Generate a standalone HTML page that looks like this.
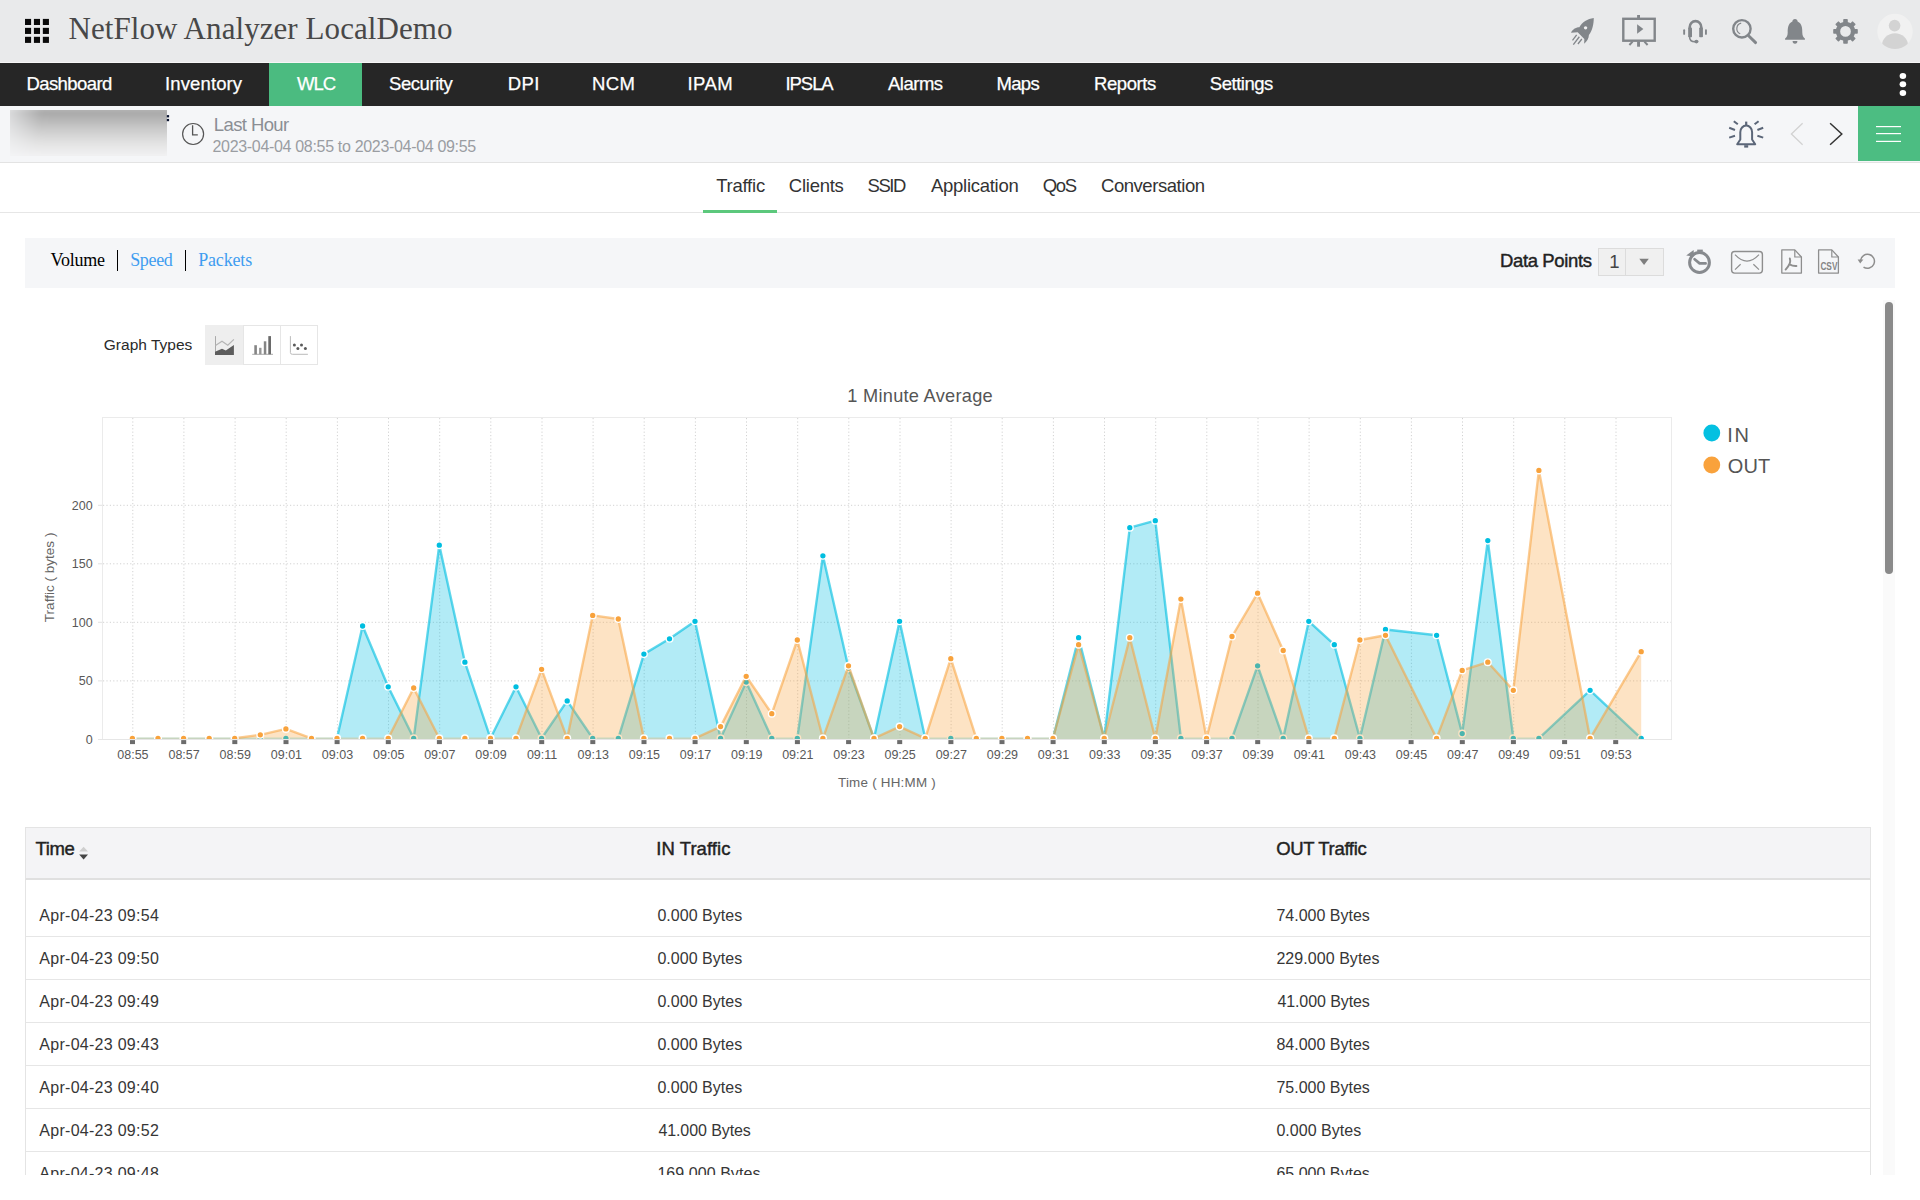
<!DOCTYPE html>
<html><head><meta charset="utf-8"><title>NetFlow Analyzer</title>
<style>
html,body{margin:0;padding:0}
body{width:1920px;height:1200px;overflow:hidden;background:#fff;position:relative;font-family:"Liberation Sans",sans-serif}
.abs{position:absolute}
.t{position:absolute;white-space:pre}
</style></head>
<body>
<!-- top header -->
<div class="abs" style="left:0;top:0;width:1920px;height:63px;background:#e9eaeb"></div>
<div class="abs" style="left:0;top:62px;width:1920px;height:1px;background:#f6f6f6"></div>
<!-- nav -->
<div class="abs" style="left:0;top:63px;width:1920px;height:43px;background:#262626"></div>
<div class="abs" style="left:269px;top:63px;width:93px;height:43px;background:#4bbb80"></div>
<!-- sub header -->
<div class="abs" style="left:0;top:106px;width:1920px;height:56px;background:#f5f6f8;border-bottom:1px solid #e3e3e3"></div>
<div class="abs" style="left:1858px;top:106px;width:62px;height:55px;background:#4cbd82"></div>
<div class="abs" style="left:10px;top:110px;width:157px;height:46px;overflow:hidden"><div class="abs" style="left:-6px;top:-3px;width:169px;height:52px;filter:blur(3px);background:linear-gradient(100deg,rgba(245,246,248,.75) 0%,rgba(245,246,248,0) 22%),linear-gradient(to bottom,#9f9f9f 0%,#b2b2b2 20%,#cdcdcd 45%,#e2e2e2 68%,#eeeeef 88%,#f3f3f5 100%)"></div></div>
<!-- tabs border -->
<div class="abs" style="left:0;top:212px;width:1920px;height:1px;background:#e6e6e6"></div>
<div class="abs" style="left:703px;top:210px;width:74px;height:3px;background:#5cc87c"></div>
<!-- toolbar -->
<div class="abs" style="left:25px;top:238px;width:1870px;height:50px;background:#f5f6f8"></div>
<div class="abs" style="left:116.8px;top:250.2px;width:1.5px;height:20.5px;background:#000"></div>
<div class="abs" style="left:184.8px;top:250.2px;width:1.5px;height:20.5px;background:#000"></div>
<!-- select -->
<div class="abs" style="left:1598px;top:248px;width:66px;height:28px;background:#f0f0f0;border:1px solid #dcdcdc;box-sizing:border-box"></div>
<div class="abs" style="left:1625px;top:248px;width:1px;height:28px;background:#dcdcdc"></div>
<!-- graph type buttons -->
<div class="abs" style="left:205px;top:325px;width:113px;height:40px;border:1px solid #e6e6e6;box-sizing:border-box;background:#fff"></div>
<div class="abs" style="left:205px;top:325px;width:37.6px;height:40px;background:#eeeeee"></div>
<div class="abs" style="left:243px;top:326px;width:1px;height:38px;background:#e6e6e6"></div>
<div class="abs" style="left:280px;top:326px;width:1px;height:38px;background:#e6e6e6"></div>
<!-- scrollbar -->
<div class="abs" style="left:1883px;top:300px;width:12px;height:875px;background:#fafafa"></div>
<div class="abs" style="left:1885px;top:302px;width:8px;height:272px;background:#8a8a8a;border-radius:4px"></div>
<!-- table -->
<div class="abs" style="left:25px;top:827px;width:1846px;height:348px;overflow:hidden">
  <div class="abs" style="left:0;top:0;width:1846px;height:400px;border-left:1px solid #e4e4e4;border-right:1px solid #e4e4e4;box-sizing:border-box"></div>
  <div class="abs" style="left:0;top:0;width:1846px;height:53px;background:#f4f4f6;border:1px solid #e4e4e4;border-bottom:2px solid #e0e0e0;box-sizing:border-box"></div>
  <div class="abs" style="left:1px;top:109px;width:1844px;height:1px;background:#e6e6e6"></div><div class="abs" style="left:1px;top:152px;width:1844px;height:1px;background:#e6e6e6"></div><div class="abs" style="left:1px;top:195px;width:1844px;height:1px;background:#e6e6e6"></div><div class="abs" style="left:1px;top:238px;width:1844px;height:1px;background:#e6e6e6"></div><div class="abs" style="left:1px;top:281px;width:1844px;height:1px;background:#e6e6e6"></div><div class="abs" style="left:1px;top:324px;width:1844px;height:1px;background:#e6e6e6"></div><div class="abs" style="left:1px;top:367px;width:1844px;height:1px;background:#e6e6e6"></div>
</div>
<div class="abs" style="left:0;top:0;width:1920px;height:1175px;overflow:hidden"><span class="t" style="left:39.30px;top:906px;font-family:'Liberation Sans';font-size:16px;line-height:20px;font-weight:400;color:#363636;letter-spacing:0.279px">Apr-04-23 09:54</span><span class="t" style="left:657.40px;top:906px;font-family:'Liberation Sans';font-size:16px;line-height:20px;font-weight:400;color:#363636;letter-spacing:0.040px">0.000 Bytes</span><span class="t" style="left:1276.40px;top:906px;font-family:'Liberation Sans';font-size:16px;line-height:20px;font-weight:400;color:#363636;letter-spacing:0.000px">74.000 Bytes</span><span class="t" style="left:39.30px;top:949px;font-family:'Liberation Sans';font-size:16px;line-height:20px;font-weight:400;color:#363636;letter-spacing:0.279px">Apr-04-23 09:50</span><span class="t" style="left:657.40px;top:949px;font-family:'Liberation Sans';font-size:16px;line-height:20px;font-weight:400;color:#363636;letter-spacing:0.040px">0.000 Bytes</span><span class="t" style="left:1276.40px;top:949px;font-family:'Liberation Sans';font-size:16px;line-height:20px;font-weight:400;color:#363636;letter-spacing:0.058px">229.000 Bytes</span><span class="t" style="left:39.30px;top:992px;font-family:'Liberation Sans';font-size:16px;line-height:20px;font-weight:400;color:#363636;letter-spacing:0.279px">Apr-04-23 09:49</span><span class="t" style="left:657.40px;top:992px;font-family:'Liberation Sans';font-size:16px;line-height:20px;font-weight:400;color:#363636;letter-spacing:0.040px">0.000 Bytes</span><span class="t" style="left:1277.40px;top:992px;font-family:'Liberation Sans';font-size:16px;line-height:20px;font-weight:400;color:#363636;letter-spacing:-0.091px">41.000 Bytes</span><span class="t" style="left:39.30px;top:1035px;font-family:'Liberation Sans';font-size:16px;line-height:20px;font-weight:400;color:#363636;letter-spacing:0.279px">Apr-04-23 09:43</span><span class="t" style="left:657.40px;top:1035px;font-family:'Liberation Sans';font-size:16px;line-height:20px;font-weight:400;color:#363636;letter-spacing:0.040px">0.000 Bytes</span><span class="t" style="left:1276.40px;top:1035px;font-family:'Liberation Sans';font-size:16px;line-height:20px;font-weight:400;color:#363636;letter-spacing:0.000px">84.000 Bytes</span><span class="t" style="left:39.30px;top:1078px;font-family:'Liberation Sans';font-size:16px;line-height:20px;font-weight:400;color:#363636;letter-spacing:0.279px">Apr-04-23 09:40</span><span class="t" style="left:657.40px;top:1078px;font-family:'Liberation Sans';font-size:16px;line-height:20px;font-weight:400;color:#363636;letter-spacing:0.040px">0.000 Bytes</span><span class="t" style="left:1276.40px;top:1078px;font-family:'Liberation Sans';font-size:16px;line-height:20px;font-weight:400;color:#363636;letter-spacing:0.000px">75.000 Bytes</span><span class="t" style="left:39.30px;top:1121px;font-family:'Liberation Sans';font-size:16px;line-height:20px;font-weight:400;color:#363636;letter-spacing:0.279px">Apr-04-23 09:52</span><span class="t" style="left:658.40px;top:1121px;font-family:'Liberation Sans';font-size:16px;line-height:20px;font-weight:400;color:#363636;letter-spacing:-0.091px">41.000 Bytes</span><span class="t" style="left:1276.40px;top:1121px;font-family:'Liberation Sans';font-size:16px;line-height:20px;font-weight:400;color:#363636;letter-spacing:0.040px">0.000 Bytes</span><span class="t" style="left:39.30px;top:1164px;font-family:'Liberation Sans';font-size:16px;line-height:20px;font-weight:400;color:#363636;letter-spacing:0.279px">Apr-04-23 09:48</span><span class="t" style="left:657.40px;top:1164px;font-family:'Liberation Sans';font-size:16px;line-height:20px;font-weight:400;color:#363636;letter-spacing:0.058px">169.000 Bytes</span><span class="t" style="left:1276.40px;top:1164px;font-family:'Liberation Sans';font-size:16px;line-height:20px;font-weight:400;color:#363636;letter-spacing:0.000px">65.000 Bytes</span></div>
<svg class="abs" style="left:0;top:0" width="1920" height="1200" viewBox="0 0 1920 1200"><defs><clipPath id="pc"><rect x="102" y="417" width="1570" height="321.9"/></clipPath></defs><rect x="102.5" y="417.5" width="1569" height="322" fill="#fff" stroke="#ebebeb" stroke-width="1"/><g stroke="#d2d2d2" stroke-width="1" stroke-dasharray="1.2,2.2" fill="none"><line x1="103" y1="680.9" x2="1671" y2="680.9"/><line x1="103" y1="622.3" x2="1671" y2="622.3"/><line x1="103" y1="563.8" x2="1671" y2="563.8"/><line x1="103" y1="505.3" x2="1671" y2="505.3"/><line x1="132.8" y1="418" x2="132.8" y2="738"/><line x1="183.9" y1="418" x2="183.9" y2="738"/><line x1="235.1" y1="418" x2="235.1" y2="738"/><line x1="286.2" y1="418" x2="286.2" y2="738"/><line x1="337.4" y1="418" x2="337.4" y2="738"/><line x1="388.5" y1="418" x2="388.5" y2="738"/><line x1="439.7" y1="418" x2="439.7" y2="738"/><line x1="490.8" y1="418" x2="490.8" y2="738"/><line x1="542.0" y1="418" x2="542.0" y2="738"/><line x1="593.1" y1="418" x2="593.1" y2="738"/><line x1="644.2" y1="418" x2="644.2" y2="738"/><line x1="695.4" y1="418" x2="695.4" y2="738"/><line x1="746.5" y1="418" x2="746.5" y2="738"/><line x1="797.7" y1="418" x2="797.7" y2="738"/><line x1="848.8" y1="418" x2="848.8" y2="738"/><line x1="900.0" y1="418" x2="900.0" y2="738"/><line x1="951.1" y1="418" x2="951.1" y2="738"/><line x1="1002.2" y1="418" x2="1002.2" y2="738"/><line x1="1053.4" y1="418" x2="1053.4" y2="738"/><line x1="1104.5" y1="418" x2="1104.5" y2="738"/><line x1="1155.7" y1="418" x2="1155.7" y2="738"/><line x1="1206.8" y1="418" x2="1206.8" y2="738"/><line x1="1258.0" y1="418" x2="1258.0" y2="738"/><line x1="1309.1" y1="418" x2="1309.1" y2="738"/><line x1="1360.3" y1="418" x2="1360.3" y2="738"/><line x1="1411.4" y1="418" x2="1411.4" y2="738"/><line x1="1462.5" y1="418" x2="1462.5" y2="738"/><line x1="1513.7" y1="418" x2="1513.7" y2="738"/><line x1="1564.8" y1="418" x2="1564.8" y2="738"/><line x1="1616.0" y1="418" x2="1616.0" y2="738"/></g><line x1="98" y1="739.5" x2="1672" y2="739.5" stroke="#e6e6e6" stroke-width="1.2"/><g clip-path="url(#pc)"><polygon points="132.4,740.3 132.4,738.3 158.0,738.3 183.6,738.3 209.2,738.3 234.7,738.3 260.3,738.3 285.9,738.3 311.5,738.3 337.0,738.3 362.6,626.0 388.2,686.8 413.7,738.3 439.3,545.2 464.9,662.2 490.5,738.3 516.0,686.8 541.6,738.3 567.2,700.9 592.7,738.3 618.3,738.3 643.9,654.1 669.5,638.8 695.0,621.3 720.6,738.3 746.2,682.1 771.8,738.3 797.3,738.3 822.9,555.8 848.5,668.1 874.0,738.3 899.6,621.3 925.2,738.3 950.8,738.3 976.3,738.3 1001.9,738.3 1027.5,738.3 1053.0,738.3 1078.6,637.7 1104.2,738.3 1129.8,527.7 1155.3,520.7 1180.9,738.3 1206.5,738.3 1232.0,738.3 1257.6,665.8 1283.2,738.3 1308.8,621.3 1334.3,644.7 1359.9,738.3 1385.5,629.5 1436.6,635.3 1462.2,733.6 1487.8,540.6 1513.3,738.3 1538.9,738.3 1590.1,690.3 1641.2,738.3 1641.2,740.3" fill="#00bee0" fill-opacity="0.3"/><polyline points="337.0,738.3 362.6,626.0 388.2,686.8 413.7,738.3 439.3,545.2 464.9,662.2 490.5,738.3 516.0,686.8 541.6,738.3 567.2,700.9 592.7,738.3" fill="none" stroke="#00bee0" stroke-opacity="0.62" stroke-width="2.4" stroke-linejoin="round"/><polyline points="618.3,738.3 643.9,654.1 669.5,638.8 695.0,621.3 720.6,738.3 746.2,682.1 771.8,738.3" fill="none" stroke="#00bee0" stroke-opacity="0.62" stroke-width="2.4" stroke-linejoin="round"/><polyline points="797.3,738.3 822.9,555.8 848.5,668.1 874.0,738.3 899.6,621.3 925.2,738.3" fill="none" stroke="#00bee0" stroke-opacity="0.62" stroke-width="2.4" stroke-linejoin="round"/><polyline points="1053.0,738.3 1078.6,637.7 1104.2,738.3 1129.8,527.7 1155.3,520.7 1180.9,738.3" fill="none" stroke="#00bee0" stroke-opacity="0.62" stroke-width="2.4" stroke-linejoin="round"/><polyline points="1232.0,738.3 1257.6,665.8 1283.2,738.3 1308.8,621.3 1334.3,644.7 1359.9,738.3 1385.5,629.5 1436.6,635.3 1462.2,733.6 1487.8,540.6 1513.3,738.3" fill="none" stroke="#00bee0" stroke-opacity="0.62" stroke-width="2.4" stroke-linejoin="round"/><polyline points="1538.9,738.3 1590.1,690.3 1641.2,738.3" fill="none" stroke="#00bee0" stroke-opacity="0.62" stroke-width="2.4" stroke-linejoin="round"/><line x1="132.4" y1="737.8" x2="158.0" y2="737.8" stroke="#00bee0" stroke-opacity="0.18" stroke-width="1.2"/><line x1="158.0" y1="737.8" x2="183.6" y2="737.8" stroke="#00bee0" stroke-opacity="0.18" stroke-width="1.2"/><line x1="183.6" y1="737.8" x2="209.2" y2="737.8" stroke="#00bee0" stroke-opacity="0.18" stroke-width="1.2"/><line x1="209.2" y1="737.8" x2="234.7" y2="737.8" stroke="#00bee0" stroke-opacity="0.18" stroke-width="1.2"/><line x1="234.7" y1="737.8" x2="260.3" y2="737.8" stroke="#00bee0" stroke-opacity="0.18" stroke-width="1.2"/><line x1="260.3" y1="737.8" x2="285.9" y2="737.8" stroke="#00bee0" stroke-opacity="0.18" stroke-width="1.2"/><line x1="285.9" y1="737.8" x2="311.5" y2="737.8" stroke="#00bee0" stroke-opacity="0.18" stroke-width="1.2"/><line x1="311.5" y1="737.8" x2="337.0" y2="737.8" stroke="#00bee0" stroke-opacity="0.18" stroke-width="1.2"/><line x1="592.7" y1="737.8" x2="618.3" y2="737.8" stroke="#00bee0" stroke-opacity="0.18" stroke-width="1.2"/><line x1="771.8" y1="737.8" x2="797.3" y2="737.8" stroke="#00bee0" stroke-opacity="0.18" stroke-width="1.2"/><line x1="925.2" y1="737.8" x2="950.8" y2="737.8" stroke="#00bee0" stroke-opacity="0.18" stroke-width="1.2"/><line x1="950.8" y1="737.8" x2="976.3" y2="737.8" stroke="#00bee0" stroke-opacity="0.18" stroke-width="1.2"/><line x1="976.3" y1="737.8" x2="1001.9" y2="737.8" stroke="#00bee0" stroke-opacity="0.18" stroke-width="1.2"/><line x1="1001.9" y1="737.8" x2="1027.5" y2="737.8" stroke="#00bee0" stroke-opacity="0.18" stroke-width="1.2"/><line x1="1027.5" y1="737.8" x2="1053.0" y2="737.8" stroke="#00bee0" stroke-opacity="0.18" stroke-width="1.2"/><line x1="1180.9" y1="737.8" x2="1206.5" y2="737.8" stroke="#00bee0" stroke-opacity="0.18" stroke-width="1.2"/><line x1="1206.5" y1="737.8" x2="1232.0" y2="737.8" stroke="#00bee0" stroke-opacity="0.18" stroke-width="1.2"/><line x1="1513.3" y1="737.8" x2="1538.9" y2="737.8" stroke="#00bee0" stroke-opacity="0.18" stroke-width="1.2"/><circle cx="132.4" cy="738.3" r="3.35" fill="#00bee0" stroke="#fff" stroke-width="1.4"/><circle cx="158.0" cy="738.3" r="3.35" fill="#00bee0" stroke="#fff" stroke-width="1.4"/><circle cx="183.6" cy="738.3" r="3.35" fill="#00bee0" stroke="#fff" stroke-width="1.4"/><circle cx="209.2" cy="738.3" r="3.35" fill="#00bee0" stroke="#fff" stroke-width="1.4"/><circle cx="234.7" cy="738.3" r="3.35" fill="#00bee0" stroke="#fff" stroke-width="1.4"/><circle cx="260.3" cy="738.3" r="3.35" fill="#00bee0" stroke="#fff" stroke-width="1.4"/><circle cx="285.9" cy="738.3" r="3.35" fill="#00bee0" stroke="#fff" stroke-width="1.4"/><circle cx="311.5" cy="738.3" r="3.35" fill="#00bee0" stroke="#fff" stroke-width="1.4"/><circle cx="337.0" cy="738.3" r="3.35" fill="#00bee0" stroke="#fff" stroke-width="1.4"/><circle cx="362.6" cy="626.0" r="3.35" fill="#00bee0" stroke="#fff" stroke-width="1.4"/><circle cx="388.2" cy="686.8" r="3.35" fill="#00bee0" stroke="#fff" stroke-width="1.4"/><circle cx="413.7" cy="738.3" r="3.35" fill="#00bee0" stroke="#fff" stroke-width="1.4"/><circle cx="439.3" cy="545.2" r="3.35" fill="#00bee0" stroke="#fff" stroke-width="1.4"/><circle cx="464.9" cy="662.2" r="3.35" fill="#00bee0" stroke="#fff" stroke-width="1.4"/><circle cx="490.5" cy="738.3" r="3.35" fill="#00bee0" stroke="#fff" stroke-width="1.4"/><circle cx="516.0" cy="686.8" r="3.35" fill="#00bee0" stroke="#fff" stroke-width="1.4"/><circle cx="541.6" cy="738.3" r="3.35" fill="#00bee0" stroke="#fff" stroke-width="1.4"/><circle cx="567.2" cy="700.9" r="3.35" fill="#00bee0" stroke="#fff" stroke-width="1.4"/><circle cx="592.7" cy="738.3" r="3.35" fill="#00bee0" stroke="#fff" stroke-width="1.4"/><circle cx="618.3" cy="738.3" r="3.35" fill="#00bee0" stroke="#fff" stroke-width="1.4"/><circle cx="643.9" cy="654.1" r="3.35" fill="#00bee0" stroke="#fff" stroke-width="1.4"/><circle cx="669.5" cy="638.8" r="3.35" fill="#00bee0" stroke="#fff" stroke-width="1.4"/><circle cx="695.0" cy="621.3" r="3.35" fill="#00bee0" stroke="#fff" stroke-width="1.4"/><circle cx="720.6" cy="738.3" r="3.35" fill="#00bee0" stroke="#fff" stroke-width="1.4"/><circle cx="746.2" cy="682.1" r="3.35" fill="#00bee0" stroke="#fff" stroke-width="1.4"/><circle cx="771.8" cy="738.3" r="3.35" fill="#00bee0" stroke="#fff" stroke-width="1.4"/><circle cx="797.3" cy="738.3" r="3.35" fill="#00bee0" stroke="#fff" stroke-width="1.4"/><circle cx="822.9" cy="555.8" r="3.35" fill="#00bee0" stroke="#fff" stroke-width="1.4"/><circle cx="848.5" cy="668.1" r="3.35" fill="#00bee0" stroke="#fff" stroke-width="1.4"/><circle cx="874.0" cy="738.3" r="3.35" fill="#00bee0" stroke="#fff" stroke-width="1.4"/><circle cx="899.6" cy="621.3" r="3.35" fill="#00bee0" stroke="#fff" stroke-width="1.4"/><circle cx="925.2" cy="738.3" r="3.35" fill="#00bee0" stroke="#fff" stroke-width="1.4"/><circle cx="950.8" cy="738.3" r="3.35" fill="#00bee0" stroke="#fff" stroke-width="1.4"/><circle cx="976.3" cy="738.3" r="3.35" fill="#00bee0" stroke="#fff" stroke-width="1.4"/><circle cx="1001.9" cy="738.3" r="3.35" fill="#00bee0" stroke="#fff" stroke-width="1.4"/><circle cx="1027.5" cy="738.3" r="3.35" fill="#00bee0" stroke="#fff" stroke-width="1.4"/><circle cx="1053.0" cy="738.3" r="3.35" fill="#00bee0" stroke="#fff" stroke-width="1.4"/><circle cx="1078.6" cy="637.7" r="3.35" fill="#00bee0" stroke="#fff" stroke-width="1.4"/><circle cx="1104.2" cy="738.3" r="3.35" fill="#00bee0" stroke="#fff" stroke-width="1.4"/><circle cx="1129.8" cy="527.7" r="3.35" fill="#00bee0" stroke="#fff" stroke-width="1.4"/><circle cx="1155.3" cy="520.7" r="3.35" fill="#00bee0" stroke="#fff" stroke-width="1.4"/><circle cx="1180.9" cy="738.3" r="3.35" fill="#00bee0" stroke="#fff" stroke-width="1.4"/><circle cx="1206.5" cy="738.3" r="3.35" fill="#00bee0" stroke="#fff" stroke-width="1.4"/><circle cx="1232.0" cy="738.3" r="3.35" fill="#00bee0" stroke="#fff" stroke-width="1.4"/><circle cx="1257.6" cy="665.8" r="3.35" fill="#00bee0" stroke="#fff" stroke-width="1.4"/><circle cx="1283.2" cy="738.3" r="3.35" fill="#00bee0" stroke="#fff" stroke-width="1.4"/><circle cx="1308.8" cy="621.3" r="3.35" fill="#00bee0" stroke="#fff" stroke-width="1.4"/><circle cx="1334.3" cy="644.7" r="3.35" fill="#00bee0" stroke="#fff" stroke-width="1.4"/><circle cx="1359.9" cy="738.3" r="3.35" fill="#00bee0" stroke="#fff" stroke-width="1.4"/><circle cx="1385.5" cy="629.5" r="3.35" fill="#00bee0" stroke="#fff" stroke-width="1.4"/><circle cx="1436.6" cy="635.3" r="3.35" fill="#00bee0" stroke="#fff" stroke-width="1.4"/><circle cx="1462.2" cy="733.6" r="3.35" fill="#00bee0" stroke="#fff" stroke-width="1.4"/><circle cx="1487.8" cy="540.6" r="3.35" fill="#00bee0" stroke="#fff" stroke-width="1.4"/><circle cx="1513.3" cy="738.3" r="3.35" fill="#00bee0" stroke="#fff" stroke-width="1.4"/><circle cx="1538.9" cy="738.3" r="3.35" fill="#00bee0" stroke="#fff" stroke-width="1.4"/><circle cx="1590.1" cy="690.3" r="3.35" fill="#00bee0" stroke="#fff" stroke-width="1.4"/><circle cx="1641.2" cy="738.3" r="3.35" fill="#00bee0" stroke="#fff" stroke-width="1.4"/><polygon points="132.4,740.3 132.4,738.3 158.0,738.3 183.6,738.3 209.2,738.3 234.7,738.3 260.3,734.8 285.9,728.9 311.5,738.3 337.0,738.3 362.6,738.3 388.2,738.3 413.7,688.0 439.3,738.3 464.9,738.3 490.5,738.3 516.0,738.3 541.6,669.3 567.2,738.3 592.7,615.4 618.3,619.0 643.9,738.3 669.5,738.3 695.0,738.3 720.6,726.6 746.2,676.3 771.8,713.7 797.3,640.0 822.9,738.3 848.5,665.8 874.0,738.3 899.6,726.6 925.2,738.3 950.8,658.7 976.3,738.3 1001.9,738.3 1027.5,738.3 1053.0,738.3 1078.6,644.7 1104.2,738.3 1129.8,637.7 1155.3,738.3 1180.9,599.1 1206.5,738.3 1232.0,636.5 1257.6,593.2 1283.2,650.5 1308.8,738.3 1334.3,738.3 1359.9,640.0 1385.5,635.3 1436.6,738.3 1462.2,670.4 1487.8,662.2 1513.3,690.3 1538.9,470.4 1590.1,738.3 1641.2,651.7 1641.2,740.3" fill="#f8a23c" fill-opacity="0.3"/><polyline points="234.7,738.3 260.3,734.8 285.9,728.9 311.5,738.3" fill="none" stroke="#f8a23c" stroke-opacity="0.56" stroke-width="2.4" stroke-linejoin="round"/><polyline points="388.2,738.3 413.7,688.0 439.3,738.3" fill="none" stroke="#f8a23c" stroke-opacity="0.56" stroke-width="2.4" stroke-linejoin="round"/><polyline points="516.0,738.3 541.6,669.3 567.2,738.3 592.7,615.4 618.3,619.0 643.9,738.3" fill="none" stroke="#f8a23c" stroke-opacity="0.56" stroke-width="2.4" stroke-linejoin="round"/><polyline points="695.0,738.3 720.6,726.6 746.2,676.3 771.8,713.7 797.3,640.0 822.9,738.3 848.5,665.8 874.0,738.3 899.6,726.6 925.2,738.3 950.8,658.7 976.3,738.3" fill="none" stroke="#f8a23c" stroke-opacity="0.56" stroke-width="2.4" stroke-linejoin="round"/><polyline points="1053.0,738.3 1078.6,644.7 1104.2,738.3 1129.8,637.7 1155.3,738.3 1180.9,599.1 1206.5,738.3 1232.0,636.5 1257.6,593.2 1283.2,650.5 1308.8,738.3" fill="none" stroke="#f8a23c" stroke-opacity="0.56" stroke-width="2.4" stroke-linejoin="round"/><polyline points="1334.3,738.3 1359.9,640.0 1385.5,635.3 1436.6,738.3 1462.2,670.4 1487.8,662.2 1513.3,690.3 1538.9,470.4 1590.1,738.3 1641.2,651.7" fill="none" stroke="#f8a23c" stroke-opacity="0.56" stroke-width="2.4" stroke-linejoin="round"/><line x1="132.4" y1="737.8" x2="158.0" y2="737.8" stroke="#f8a23c" stroke-opacity="0.18" stroke-width="1.2"/><line x1="158.0" y1="737.8" x2="183.6" y2="737.8" stroke="#f8a23c" stroke-opacity="0.18" stroke-width="1.2"/><line x1="183.6" y1="737.8" x2="209.2" y2="737.8" stroke="#f8a23c" stroke-opacity="0.18" stroke-width="1.2"/><line x1="209.2" y1="737.8" x2="234.7" y2="737.8" stroke="#f8a23c" stroke-opacity="0.18" stroke-width="1.2"/><line x1="311.5" y1="737.8" x2="337.0" y2="737.8" stroke="#f8a23c" stroke-opacity="0.18" stroke-width="1.2"/><line x1="337.0" y1="737.8" x2="362.6" y2="737.8" stroke="#f8a23c" stroke-opacity="0.18" stroke-width="1.2"/><line x1="362.6" y1="737.8" x2="388.2" y2="737.8" stroke="#f8a23c" stroke-opacity="0.18" stroke-width="1.2"/><line x1="439.3" y1="737.8" x2="464.9" y2="737.8" stroke="#f8a23c" stroke-opacity="0.18" stroke-width="1.2"/><line x1="464.9" y1="737.8" x2="490.5" y2="737.8" stroke="#f8a23c" stroke-opacity="0.18" stroke-width="1.2"/><line x1="490.5" y1="737.8" x2="516.0" y2="737.8" stroke="#f8a23c" stroke-opacity="0.18" stroke-width="1.2"/><line x1="643.9" y1="737.8" x2="669.5" y2="737.8" stroke="#f8a23c" stroke-opacity="0.18" stroke-width="1.2"/><line x1="669.5" y1="737.8" x2="695.0" y2="737.8" stroke="#f8a23c" stroke-opacity="0.18" stroke-width="1.2"/><line x1="976.3" y1="737.8" x2="1001.9" y2="737.8" stroke="#f8a23c" stroke-opacity="0.18" stroke-width="1.2"/><line x1="1001.9" y1="737.8" x2="1027.5" y2="737.8" stroke="#f8a23c" stroke-opacity="0.18" stroke-width="1.2"/><line x1="1027.5" y1="737.8" x2="1053.0" y2="737.8" stroke="#f8a23c" stroke-opacity="0.18" stroke-width="1.2"/><line x1="1308.8" y1="737.8" x2="1334.3" y2="737.8" stroke="#f8a23c" stroke-opacity="0.18" stroke-width="1.2"/><circle cx="132.4" cy="738.3" r="3.35" fill="#f8a23c" stroke="#fff" stroke-width="1.4"/><circle cx="158.0" cy="738.3" r="3.35" fill="#f8a23c" stroke="#fff" stroke-width="1.4"/><circle cx="183.6" cy="738.3" r="3.35" fill="#f8a23c" stroke="#fff" stroke-width="1.4"/><circle cx="209.2" cy="738.3" r="3.35" fill="#f8a23c" stroke="#fff" stroke-width="1.4"/><circle cx="234.7" cy="738.3" r="3.35" fill="#f8a23c" stroke="#fff" stroke-width="1.4"/><circle cx="260.3" cy="734.8" r="3.35" fill="#f8a23c" stroke="#fff" stroke-width="1.4"/><circle cx="285.9" cy="728.9" r="3.35" fill="#f8a23c" stroke="#fff" stroke-width="1.4"/><circle cx="311.5" cy="738.3" r="3.35" fill="#f8a23c" stroke="#fff" stroke-width="1.4"/><circle cx="337.0" cy="738.3" r="3.35" fill="#f8a23c" stroke="#fff" stroke-width="1.4"/><circle cx="362.6" cy="738.3" r="3.35" fill="#f8a23c" stroke="#fff" stroke-width="1.4"/><circle cx="388.2" cy="738.3" r="3.35" fill="#f8a23c" stroke="#fff" stroke-width="1.4"/><circle cx="413.7" cy="688.0" r="3.35" fill="#f8a23c" stroke="#fff" stroke-width="1.4"/><circle cx="439.3" cy="738.3" r="3.35" fill="#f8a23c" stroke="#fff" stroke-width="1.4"/><circle cx="464.9" cy="738.3" r="3.35" fill="#f8a23c" stroke="#fff" stroke-width="1.4"/><circle cx="490.5" cy="738.3" r="3.35" fill="#f8a23c" stroke="#fff" stroke-width="1.4"/><circle cx="516.0" cy="738.3" r="3.35" fill="#f8a23c" stroke="#fff" stroke-width="1.4"/><circle cx="541.6" cy="669.3" r="3.35" fill="#f8a23c" stroke="#fff" stroke-width="1.4"/><circle cx="567.2" cy="738.3" r="3.35" fill="#f8a23c" stroke="#fff" stroke-width="1.4"/><circle cx="592.7" cy="615.4" r="3.35" fill="#f8a23c" stroke="#fff" stroke-width="1.4"/><circle cx="618.3" cy="619.0" r="3.35" fill="#f8a23c" stroke="#fff" stroke-width="1.4"/><circle cx="643.9" cy="738.3" r="3.35" fill="#f8a23c" stroke="#fff" stroke-width="1.4"/><circle cx="669.5" cy="738.3" r="3.35" fill="#f8a23c" stroke="#fff" stroke-width="1.4"/><circle cx="695.0" cy="738.3" r="3.35" fill="#f8a23c" stroke="#fff" stroke-width="1.4"/><circle cx="720.6" cy="726.6" r="3.35" fill="#f8a23c" stroke="#fff" stroke-width="1.4"/><circle cx="746.2" cy="676.3" r="3.35" fill="#f8a23c" stroke="#fff" stroke-width="1.4"/><circle cx="771.8" cy="713.7" r="3.35" fill="#f8a23c" stroke="#fff" stroke-width="1.4"/><circle cx="797.3" cy="640.0" r="3.35" fill="#f8a23c" stroke="#fff" stroke-width="1.4"/><circle cx="822.9" cy="738.3" r="3.35" fill="#f8a23c" stroke="#fff" stroke-width="1.4"/><circle cx="848.5" cy="665.8" r="3.35" fill="#f8a23c" stroke="#fff" stroke-width="1.4"/><circle cx="874.0" cy="738.3" r="3.35" fill="#f8a23c" stroke="#fff" stroke-width="1.4"/><circle cx="899.6" cy="726.6" r="3.35" fill="#f8a23c" stroke="#fff" stroke-width="1.4"/><circle cx="925.2" cy="738.3" r="3.35" fill="#f8a23c" stroke="#fff" stroke-width="1.4"/><circle cx="950.8" cy="658.7" r="3.35" fill="#f8a23c" stroke="#fff" stroke-width="1.4"/><circle cx="976.3" cy="738.3" r="3.35" fill="#f8a23c" stroke="#fff" stroke-width="1.4"/><circle cx="1001.9" cy="738.3" r="3.35" fill="#f8a23c" stroke="#fff" stroke-width="1.4"/><circle cx="1027.5" cy="738.3" r="3.35" fill="#f8a23c" stroke="#fff" stroke-width="1.4"/><circle cx="1053.0" cy="738.3" r="3.35" fill="#f8a23c" stroke="#fff" stroke-width="1.4"/><circle cx="1078.6" cy="644.7" r="3.35" fill="#f8a23c" stroke="#fff" stroke-width="1.4"/><circle cx="1104.2" cy="738.3" r="3.35" fill="#f8a23c" stroke="#fff" stroke-width="1.4"/><circle cx="1129.8" cy="637.7" r="3.35" fill="#f8a23c" stroke="#fff" stroke-width="1.4"/><circle cx="1155.3" cy="738.3" r="3.35" fill="#f8a23c" stroke="#fff" stroke-width="1.4"/><circle cx="1180.9" cy="599.1" r="3.35" fill="#f8a23c" stroke="#fff" stroke-width="1.4"/><circle cx="1206.5" cy="738.3" r="3.35" fill="#f8a23c" stroke="#fff" stroke-width="1.4"/><circle cx="1232.0" cy="636.5" r="3.35" fill="#f8a23c" stroke="#fff" stroke-width="1.4"/><circle cx="1257.6" cy="593.2" r="3.35" fill="#f8a23c" stroke="#fff" stroke-width="1.4"/><circle cx="1283.2" cy="650.5" r="3.35" fill="#f8a23c" stroke="#fff" stroke-width="1.4"/><circle cx="1308.8" cy="738.3" r="3.35" fill="#f8a23c" stroke="#fff" stroke-width="1.4"/><circle cx="1334.3" cy="738.3" r="3.35" fill="#f8a23c" stroke="#fff" stroke-width="1.4"/><circle cx="1359.9" cy="640.0" r="3.35" fill="#f8a23c" stroke="#fff" stroke-width="1.4"/><circle cx="1385.5" cy="635.3" r="3.35" fill="#f8a23c" stroke="#fff" stroke-width="1.4"/><circle cx="1436.6" cy="738.3" r="3.35" fill="#f8a23c" stroke="#fff" stroke-width="1.4"/><circle cx="1462.2" cy="670.4" r="3.35" fill="#f8a23c" stroke="#fff" stroke-width="1.4"/><circle cx="1487.8" cy="662.2" r="3.35" fill="#f8a23c" stroke="#fff" stroke-width="1.4"/><circle cx="1513.3" cy="690.3" r="3.35" fill="#f8a23c" stroke="#fff" stroke-width="1.4"/><circle cx="1538.9" cy="470.4" r="3.35" fill="#f8a23c" stroke="#fff" stroke-width="1.4"/><circle cx="1590.1" cy="738.3" r="3.35" fill="#f8a23c" stroke="#fff" stroke-width="1.4"/><circle cx="1641.2" cy="651.7" r="3.35" fill="#f8a23c" stroke="#fff" stroke-width="1.4"/></g><rect x="130.0" y="740.1" width="5" height="4" fill="#6c6c6c"/><rect x="181.2" y="740.1" width="5" height="4" fill="#6c6c6c"/><rect x="232.3" y="740.1" width="5" height="4" fill="#6c6c6c"/><rect x="283.5" y="740.1" width="5" height="4" fill="#6c6c6c"/><rect x="334.6" y="740.1" width="5" height="4" fill="#6c6c6c"/><rect x="385.8" y="740.1" width="5" height="4" fill="#6c6c6c"/><rect x="436.9" y="740.1" width="5" height="4" fill="#6c6c6c"/><rect x="488.1" y="740.1" width="5" height="4" fill="#6c6c6c"/><rect x="539.2" y="740.1" width="5" height="4" fill="#6c6c6c"/><rect x="590.3" y="740.1" width="5" height="4" fill="#6c6c6c"/><rect x="641.5" y="740.1" width="5" height="4" fill="#6c6c6c"/><rect x="692.6" y="740.1" width="5" height="4" fill="#6c6c6c"/><rect x="743.8" y="740.1" width="5" height="4" fill="#6c6c6c"/><rect x="794.9" y="740.1" width="5" height="4" fill="#6c6c6c"/><rect x="846.1" y="740.1" width="5" height="4" fill="#6c6c6c"/><rect x="897.2" y="740.1" width="5" height="4" fill="#6c6c6c"/><rect x="948.4" y="740.1" width="5" height="4" fill="#6c6c6c"/><rect x="999.5" y="740.1" width="5" height="4" fill="#6c6c6c"/><rect x="1050.6" y="740.1" width="5" height="4" fill="#6c6c6c"/><rect x="1101.8" y="740.1" width="5" height="4" fill="#6c6c6c"/><rect x="1152.9" y="740.1" width="5" height="4" fill="#6c6c6c"/><rect x="1204.1" y="740.1" width="5" height="4" fill="#6c6c6c"/><rect x="1255.2" y="740.1" width="5" height="4" fill="#6c6c6c"/><rect x="1306.4" y="740.1" width="5" height="4" fill="#6c6c6c"/><rect x="1357.5" y="740.1" width="5" height="4" fill="#6c6c6c"/><rect x="1408.6" y="740.1" width="5" height="4" fill="#6c6c6c"/><rect x="1459.8" y="740.1" width="5" height="4" fill="#6c6c6c"/><rect x="1510.9" y="740.1" width="5" height="4" fill="#6c6c6c"/><rect x="1562.1" y="740.1" width="5" height="4" fill="#6c6c6c"/><rect x="1613.2" y="740.1" width="5" height="4" fill="#6c6c6c"/><g font-family="Liberation Sans, sans-serif" font-size="12.5" fill="#585858"><text x="132.9" y="758.9" text-anchor="middle">08:55</text><text x="184.1" y="758.9" text-anchor="middle">08:57</text><text x="235.2" y="758.9" text-anchor="middle">08:59</text><text x="286.4" y="758.9" text-anchor="middle">09:01</text><text x="337.5" y="758.9" text-anchor="middle">09:03</text><text x="388.7" y="758.9" text-anchor="middle">09:05</text><text x="439.8" y="758.9" text-anchor="middle">09:07</text><text x="491.0" y="758.9" text-anchor="middle">09:09</text><text x="542.1" y="758.9" text-anchor="middle">09:11</text><text x="593.2" y="758.9" text-anchor="middle">09:13</text><text x="644.4" y="758.9" text-anchor="middle">09:15</text><text x="695.5" y="758.9" text-anchor="middle">09:17</text><text x="746.7" y="758.9" text-anchor="middle">09:19</text><text x="797.8" y="758.9" text-anchor="middle">09:21</text><text x="849.0" y="758.9" text-anchor="middle">09:23</text><text x="900.1" y="758.9" text-anchor="middle">09:25</text><text x="951.3" y="758.9" text-anchor="middle">09:27</text><text x="1002.4" y="758.9" text-anchor="middle">09:29</text><text x="1053.5" y="758.9" text-anchor="middle">09:31</text><text x="1104.7" y="758.9" text-anchor="middle">09:33</text><text x="1155.8" y="758.9" text-anchor="middle">09:35</text><text x="1207.0" y="758.9" text-anchor="middle">09:37</text><text x="1258.1" y="758.9" text-anchor="middle">09:39</text><text x="1309.3" y="758.9" text-anchor="middle">09:41</text><text x="1360.4" y="758.9" text-anchor="middle">09:43</text><text x="1411.5" y="758.9" text-anchor="middle">09:45</text><text x="1462.7" y="758.9" text-anchor="middle">09:47</text><text x="1513.8" y="758.9" text-anchor="middle">09:49</text><text x="1565.0" y="758.9" text-anchor="middle">09:51</text><text x="1616.1" y="758.9" text-anchor="middle">09:53</text><text x="92.7" y="743.8" text-anchor="end">0</text><text x="92.7" y="685.3" text-anchor="end">50</text><text x="92.7" y="626.7" text-anchor="end">100</text><text x="92.7" y="568.2" text-anchor="end">150</text><text x="92.7" y="509.7" text-anchor="end">200</text></g><line x1="98" y1="680.9" x2="102" y2="680.9" stroke="#e2e2e2" stroke-width="1"/><line x1="98" y1="622.3" x2="102" y2="622.3" stroke="#e2e2e2" stroke-width="1"/><line x1="98" y1="563.8" x2="102" y2="563.8" stroke="#e2e2e2" stroke-width="1"/><line x1="98" y1="505.3" x2="102" y2="505.3" stroke="#e2e2e2" stroke-width="1"/><text transform="translate(54.2,577.4) rotate(-90)" text-anchor="middle" font-family="Liberation Sans, sans-serif" font-size="13.55" fill="#666">Traffic ( bytes )</text><circle cx="1711.8" cy="433" r="8.4" fill="#04c0e1"/><circle cx="1711.8" cy="465" r="8.4" fill="#f9a23c"/></svg>
<span class="t" style="left:68.50px;top:11px;font-family:'Liberation Serif';font-size:31px;line-height:35px;font-weight:400;color:#484848;letter-spacing:0.070px">NetFlow Analyzer LocalDemo</span><span class="t" style="-webkit-text-stroke:0.25px #fff;left:26.50px;top:73px;font-family:'Liberation Sans';font-size:18.5px;line-height:22px;font-weight:400;color:#fff;letter-spacing:-0.594px">Dashboard</span><span class="t" style="-webkit-text-stroke:0.25px #fff;left:165.00px;top:73px;font-family:'Liberation Sans';font-size:18.5px;line-height:22px;font-weight:400;color:#fff;letter-spacing:0.125px">Inventory</span><span class="t" style="-webkit-text-stroke:0.25px #fff;left:297.00px;top:73px;font-family:'Liberation Sans';font-size:18.5px;line-height:22px;font-weight:400;color:#fff;letter-spacing:-1.000px">WLC</span><span class="t" style="-webkit-text-stroke:0.25px #fff;left:389.00px;top:73px;font-family:'Liberation Sans';font-size:18.5px;line-height:22px;font-weight:400;color:#fff;letter-spacing:-0.429px">Security</span><span class="t" style="-webkit-text-stroke:0.25px #fff;left:507.75px;top:73px;font-family:'Liberation Sans';font-size:18.5px;line-height:22px;font-weight:400;color:#fff;letter-spacing:0.375px">DPI</span><span class="t" style="-webkit-text-stroke:0.25px #fff;left:592.00px;top:73px;font-family:'Liberation Sans';font-size:18.5px;line-height:22px;font-weight:400;color:#fff;letter-spacing:0.375px">NCM</span><span class="t" style="-webkit-text-stroke:0.25px #fff;left:687.50px;top:73px;font-family:'Liberation Sans';font-size:18.5px;line-height:22px;font-weight:400;color:#fff;letter-spacing:0.417px">IPAM</span><span class="t" style="-webkit-text-stroke:0.25px #fff;left:785.50px;top:73px;font-family:'Liberation Sans';font-size:18.5px;line-height:22px;font-weight:400;color:#fff;letter-spacing:-1.062px">IPSLA</span><span class="t" style="-webkit-text-stroke:0.25px #fff;left:888.00px;top:73px;font-family:'Liberation Sans';font-size:18.5px;line-height:22px;font-weight:400;color:#fff;letter-spacing:-0.500px">Alarms</span><span class="t" style="-webkit-text-stroke:0.25px #fff;left:996.50px;top:73px;font-family:'Liberation Sans';font-size:18.5px;line-height:22px;font-weight:400;color:#fff;letter-spacing:-0.667px">Maps</span><span class="t" style="-webkit-text-stroke:0.25px #fff;left:1094.00px;top:73px;font-family:'Liberation Sans';font-size:18.5px;line-height:22px;font-weight:400;color:#fff;letter-spacing:-0.417px">Reports</span><span class="t" style="-webkit-text-stroke:0.25px #fff;left:1209.75px;top:73px;font-family:'Liberation Sans';font-size:18.5px;line-height:22px;font-weight:400;color:#fff;letter-spacing:-0.464px">Settings</span><span class="t" style="left:213.80px;top:114px;font-family:'Liberation Sans';font-size:18.5px;line-height:22px;font-weight:400;color:#8b8e94;letter-spacing:-0.600px">Last Hour</span><span class="t" style="left:212.50px;top:137px;font-family:'Liberation Sans';font-size:16px;line-height:20px;font-weight:400;color:#9a9da2;letter-spacing:-0.320px">2023-04-04 08:55 to 2023-04-04 09:55</span><span class="t" style="left:716.20px;top:175px;font-family:'Liberation Sans';font-size:18.5px;line-height:22px;font-weight:400;color:#333;letter-spacing:-0.233px">Traffic</span><span class="t" style="left:788.80px;top:175px;font-family:'Liberation Sans';font-size:18.5px;line-height:22px;font-weight:400;color:#333;letter-spacing:-0.250px">Clients</span><span class="t" style="left:867.60px;top:175px;font-family:'Liberation Sans';font-size:18.5px;line-height:22px;font-weight:400;color:#333;letter-spacing:-1.500px">SSID</span><span class="t" style="left:931.00px;top:175px;font-family:'Liberation Sans';font-size:18.5px;line-height:22px;font-weight:400;color:#333;letter-spacing:-0.280px">Application</span><span class="t" style="left:1042.80px;top:175px;font-family:'Liberation Sans';font-size:18.5px;line-height:22px;font-weight:400;color:#333;letter-spacing:-1.350px">QoS</span><span class="t" style="left:1101.00px;top:175px;font-family:'Liberation Sans';font-size:18.5px;line-height:22px;font-weight:400;color:#333;letter-spacing:-0.455px">Conversation</span><span class="t" style="left:50.50px;top:249px;font-family:'Liberation Serif';font-size:18px;line-height:22px;font-weight:400;color:#000;letter-spacing:-0.260px">Volume</span><span class="t" style="left:130.20px;top:249px;font-family:'Liberation Serif';font-size:18px;line-height:22px;font-weight:400;color:#3f9df0;letter-spacing:-0.350px">Speed</span><span class="t" style="left:198.20px;top:249px;font-family:'Liberation Serif';font-size:18px;line-height:22px;font-weight:400;color:#3f9df0;letter-spacing:-0.167px">Packets</span><span class="t" style="-webkit-text-stroke:0.42px #222;left:1500.00px;top:250px;font-family:'Liberation Sans';font-size:18.5px;line-height:22px;font-weight:400;color:#222;letter-spacing:-0.370px">Data Points</span><span class="t" style="left:1609.30px;top:251px;font-family:'Liberation Sans';font-size:18.5px;line-height:22px;font-weight:400;color:#444;letter-spacing:0.000px">1</span><span class="t" style="left:103.80px;top:335px;font-family:'Liberation Sans';font-size:15.5px;line-height:20px;font-weight:400;color:#2a2a2a;letter-spacing:0.000px">Graph Types</span><span class="t" style="left:847.25px;top:385px;font-family:'Liberation Sans';font-size:18.2px;line-height:22px;font-weight:400;color:#555;letter-spacing:0.283px">1 Minute Average</span><span class="t" style="left:1727.30px;top:423px;font-family:'Liberation Sans';font-size:20px;line-height:24px;font-weight:400;color:#555;letter-spacing:1.700px">IN</span><span class="t" style="left:1727.80px;top:454px;font-family:'Liberation Sans';font-size:20px;line-height:24px;font-weight:400;color:#555;letter-spacing:0.100px">OUT</span><span class="t" style="left:838.00px;top:774px;font-family:'Liberation Sans';font-size:13.4px;line-height:17px;font-weight:400;color:#666;letter-spacing:0.231px">Time ( HH:MM )</span><span class="t" style="-webkit-text-stroke:0.42px #222;left:35.50px;top:838px;font-family:'Liberation Sans';font-size:18.5px;line-height:22px;font-weight:400;color:#222;letter-spacing:-0.367px">Time</span><span class="t" style="-webkit-text-stroke:0.42px #222;left:656.20px;top:838px;font-family:'Liberation Sans';font-size:18.5px;line-height:22px;font-weight:400;color:#222;letter-spacing:0.067px">IN Traffic</span><span class="t" style="-webkit-text-stroke:0.42px #222;left:1276.20px;top:838px;font-family:'Liberation Sans';font-size:18.5px;line-height:22px;font-weight:400;color:#222;letter-spacing:-0.340px">OUT Traffic</span>
<svg class="abs" style="left:0;top:0" width="1920" height="1200" viewBox="0 0 1920 1200" fill="none">
<rect x="25.00" y="18.90" width="6.1" height="6.1" fill="#0a0a0a"/>
<rect x="33.92" y="18.90" width="6.1" height="6.1" fill="#0a0a0a"/>
<rect x="42.84" y="18.90" width="6.1" height="6.1" fill="#0a0a0a"/>
<rect x="25.00" y="27.85" width="6.1" height="6.1" fill="#0a0a0a"/>
<rect x="33.92" y="27.85" width="6.1" height="6.1" fill="#0a0a0a"/>
<rect x="42.84" y="27.85" width="6.1" height="6.1" fill="#0a0a0a"/>
<rect x="25.00" y="36.80" width="6.1" height="6.1" fill="#0a0a0a"/>
<rect x="33.92" y="36.80" width="6.1" height="6.1" fill="#0a0a0a"/>
<rect x="42.84" y="36.80" width="6.1" height="6.1" fill="#0a0a0a"/>
<path d="M 1593.75,18.00 C 1587.50,18.67 1582.08,22.17 1579.33,27.33 C 1575.42,27.33 1572.50,29.83 1571.00,32.75 L 1577.67,32.33 L 1584.33,39.00 L 1584.17,43.67 C 1587.08,41.33 1588.75,38.83 1588.92,35.08 C 1592.50,30.50 1593.75,23.83 1593.75,18.00 Z" fill="#82868a"/>
<circle cx="1585.58" cy="27.83" r="1.7" fill="#f1f1f1"/>
<line x1="1576.67" y1="34.83" x2="1572.50" y2="40.33" stroke="#82868a" stroke-width="1.3"/>
<line x1="1579.33" y1="36.75" x2="1573.33" y2="44.67" stroke="#82868a" stroke-width="1.3"/>
<line x1="1581.83" y1="39.00" x2="1577.92" y2="44.00" stroke="#82868a" stroke-width="1.3"/>
<rect x="1623.3" y="18.8" width="31.4" height="21.9" stroke="#82868a" stroke-width="2.4"/>
<rect x="1637.1" y="15" width="2.9" height="3" fill="#82868a"/>
<rect x="1637.1" y="41.5" width="2.9" height="5.2" fill="#82868a"/>
<path d="M1637.1,24.2 L1643.4,29 L1637.1,33.8 Z" fill="#82868a"/>
<path d="M1632.6,41.6 L1629.4,45 M1644.4,41.6 L1647.6,45" stroke="#82868a" stroke-width="2"/>
<path d="M1689.7,37 V27.2 a5.6,5.9 0 0 1 11.6,0 V37" stroke="#82868a" stroke-width="2.6"/>
<rect x="1688.4" y="27.4" width="3.6" height="9.8" rx="0.8" fill="#82868a"/>
<rect x="1699.2" y="27.4" width="3.6" height="9.8" rx="0.8" fill="#82868a"/>
<rect x="1683.2" y="29.3" width="1.9" height="5.5" rx="0.9" fill="#82868a"/>
<rect x="1705" y="29.3" width="1.9" height="5.5" rx="0.9" fill="#82868a"/>
<path d="M1689.6,37 C1689.6,40.5 1691.5,41.8 1695,41.8" stroke="#82868a" stroke-width="1.6"/>
<ellipse cx="1696.4" cy="41.6" rx="2.1" ry="1.8" fill="#82868a"/>
<circle cx="1741.9" cy="28.8" r="8.7" stroke="#82868a" stroke-width="2.4"/>
<line x1="1748.6" y1="35.8" x2="1755.6" y2="42.6" stroke="#82868a" stroke-width="2.9" stroke-linecap="round"/>
<path d="M1741.2,23.2 A5.6,5.6 0 0 0 1740.2,33.8" stroke="#82868a" stroke-width="1.2"/>
<path d="M 1795.00,18.94 C 1796.56,18.94 1797.60,19.98 1797.60,21.54 C 1802.29,23.62 1802.29,28.83 1802.29,32.48 C 1802.29,35.60 1803.33,37.17 1804.90,38.42 L 1804.90,39.77 L 1785.10,39.77 L 1785.10,38.42 C 1786.67,37.17 1787.71,35.60 1787.71,32.48 C 1787.71,28.83 1787.71,23.62 1792.40,21.54 C 1792.40,19.98 1793.44,18.94 1795.00,18.94 Z" fill="#82868a"/>
<path d="M1792.60,41.12 L1797.40,41.12 A2.4,2.6 0 0 1 1792.60,41.12 Z" fill="#82868a"/>
<rect x="1843.20" y="19.10" width="4.6" height="5" rx="0.8" fill="#82868a" transform="rotate(0 1845.5 31.4)"/><rect x="1843.20" y="19.10" width="4.6" height="5" rx="0.8" fill="#82868a" transform="rotate(45 1845.5 31.4)"/><rect x="1843.20" y="19.10" width="4.6" height="5" rx="0.8" fill="#82868a" transform="rotate(90 1845.5 31.4)"/><rect x="1843.20" y="19.10" width="4.6" height="5" rx="0.8" fill="#82868a" transform="rotate(135 1845.5 31.4)"/><rect x="1843.20" y="19.10" width="4.6" height="5" rx="0.8" fill="#82868a" transform="rotate(180 1845.5 31.4)"/><rect x="1843.20" y="19.10" width="4.6" height="5" rx="0.8" fill="#82868a" transform="rotate(225 1845.5 31.4)"/><rect x="1843.20" y="19.10" width="4.6" height="5" rx="0.8" fill="#82868a" transform="rotate(270 1845.5 31.4)"/><rect x="1843.20" y="19.10" width="4.6" height="5" rx="0.8" fill="#82868a" transform="rotate(315 1845.5 31.4)"/>
<circle cx="1845.5" cy="31.4" r="7.5" stroke="#82868a" stroke-width="4.3"/>
<defs><clipPath id="av"><circle cx="1895" cy="31.4" r="17.7"/></clipPath></defs>
<circle cx="1895" cy="31.4" r="17.7" fill="#f1f1f1"/>
<g clip-path="url(#av)" fill="#d3d3d3"><circle cx="1894.6" cy="25.6" r="5.8"/><ellipse cx="1895" cy="45.5" rx="13" ry="12.3"/></g>
<ellipse cx="1902.9" cy="75.9" rx="3.3" ry="3.0" fill="#fff"/>
<ellipse cx="1902.9" cy="84.3" rx="3.3" ry="3.0" fill="#fff"/>
<ellipse cx="1902.9" cy="92.9" rx="3.3" ry="3.0" fill="#fff"/>
<rect x="166.8" y="115.1" width="2.3" height="2.3" fill="#0a1430"/><rect x="166.8" y="118.9" width="2.3" height="2.3" fill="#0a1430"/>
<circle cx="193.1" cy="134" r="10.5" stroke="#555" stroke-width="1.2"/>
<path d="M192.6,125.2 V134.8 H197.8" stroke="#555" stroke-width="1.3"/>
<path d="M1737.2,144.2 L1740.3,139.5 V132.2 a5.9,6.6 0 0 1 11.8,0 V139.5 L1755.2,144.2 Z" stroke="#5b6678" stroke-width="2" stroke-linejoin="round"/>
<path d="M1746.2,121.6 V125" stroke="#5b6678" stroke-width="2.2"/>
<rect x="1744.2" y="145.2" width="4" height="2.4" fill="#5b6678"/>
<path d="M1733.8,121.2 L1737.8,124.3 M1729.2,127.8 L1735,130 M1729.2,137.6 L1735,135.8 M1758.6,121.2 L1754.6,124.3 M1763.2,127.8 L1757.4,130 M1763.2,137.6 L1757.4,135.8" stroke="#5b6678" stroke-width="2"/>
<path d="M1802.6,123.3 L1791.4,134 L1802.6,144.7" stroke="#d2d2d2" stroke-width="1.3"/>
<path d="M1830.1,123.3 L1841.8,134 L1830.1,144.7" stroke="#333" stroke-width="1.5"/>
<rect x="1876" y="126.0" width="25" height="1.2" fill="#fff"/>
<rect x="1876" y="133.0" width="25" height="1.2" fill="#fff"/>
<rect x="1876" y="140.8" width="25" height="1.2" fill="#fff"/>
<path d="M1639.3,258.8 H1648.8 L1644.05,265 Z" fill="#7e7e7e"/>
<circle cx="1699.5" cy="262.5" r="9.9" stroke="#878a8e" stroke-width="3"/>
<rect x="1697.2" y="249.6" width="5.6" height="2.2" fill="#878a8e"/>
<path d="M1686.2,255.6 L1693.6,250 L1694,256.4 Z" fill="#878a8e"/>
<path d="M1694.6,259.2 L1699.6,263.4 H1705.6" stroke="#878a8e" stroke-width="2.7" stroke-linecap="round" stroke-linejoin="round"/>
<rect x="1731.6" y="251.5" width="30.8" height="21.6" rx="3" stroke="#8e8e8e" stroke-width="1.4"/>
<path d="M1735,254.6 Q1747,267.5 1759,254.6 M1735,269.6 L1740.6,264.2 M1759,269.6 L1753.4,264.2" stroke="#8e8e8e" stroke-width="1.2"/>
<path d="M1781.8,249.9 H1794.8000000000002 L1801.4,257 V273.1 H1781.8 Z" stroke="#8e8e8e" stroke-width="1.3" stroke-linejoin="round"/><path d="M1794.8000000000002,249.9 V257 H1801.4" stroke="#8e8e8e" stroke-width="1.2"/>
<path d="M1789.8,258.4 C1791,262 1790,264.5 1785.6,269.6 M1789.6,264.4 C1792,265.8 1794,266.2 1796.4,266" stroke="#8e8e8e" stroke-width="1.9" stroke-linecap="round"/>
<path d="M1818.6,249.9 H1831.8000000000002 L1838.4,257 V273.1 H1818.6 Z" stroke="#8e8e8e" stroke-width="1.3" stroke-linejoin="round"/><path d="M1831.8000000000002,249.9 V257 H1838.4" stroke="#8e8e8e" stroke-width="1.2"/>
<text x="1820.4" y="270.1" font-family="Liberation Sans, sans-serif" font-weight="700" font-size="10" textLength="17" lengthAdjust="spacingAndGlyphs" fill="#858585">CSV</text>
<path d="M1860.6,263.4 A7,7 0 1 0 1862.2,256.4" stroke="#8e8e8e" stroke-width="1.5" transform="rotate(-38 1867.4 261)"/>
<path d="M1857.6,259.6 H1863.4 L1860.2,263.6 Z" fill="#8e8e8e"/>
<path d="M215.5,336.1 V354.9" stroke="#aaa" stroke-width="1"/>
<path d="M215.5,345.5 L222,341.3 L227.8,345.2 L233.9,339.4" stroke="#b5b5b5" stroke-width="1.2"/>
<path d="M215,351.7 L222,348.7 L225.8,350.4 L233.9,344.9 V354.9 H215 Z" fill="#5c5c5c"/>
<path d="M252.2,354.3 H273" stroke="#aaa" stroke-width="1"/>
<rect x="254.3" y="345.2" width="2.6" height="9.1" fill="#858585"/>
<rect x="259.1" y="347.8" width="2.4" height="6.5" fill="#959595"/>
<rect x="263.8" y="341.3" width="2.5" height="13.0" fill="#858585"/>
<rect x="268.3" y="336.1" width="2.7" height="18.2" fill="#6a6a6a"/>
<path d="M290.4,336.1 V352.5 Q290.4,354.3 292.4,354.3 H307.9" stroke="#bbb" stroke-width="1"/>
<circle cx="294.4" cy="344.9" r="1.5" fill="#5a5a5a"/>
<circle cx="301.5" cy="344.9" r="1.5" fill="#5a5a5a"/>
<circle cx="297.9" cy="348.6" r="1.5" fill="#5a5a5a"/>
<circle cx="305.4" cy="348.6" r="1.5" fill="#5a5a5a"/>
<path d="M79.2,851.6 H88 L83.6,846.8 Z" fill="#cfcfcf"/><path d="M79.2,854.6 H88 L83.6,859.6 Z" fill="#444"/>
</svg>
</body></html>
